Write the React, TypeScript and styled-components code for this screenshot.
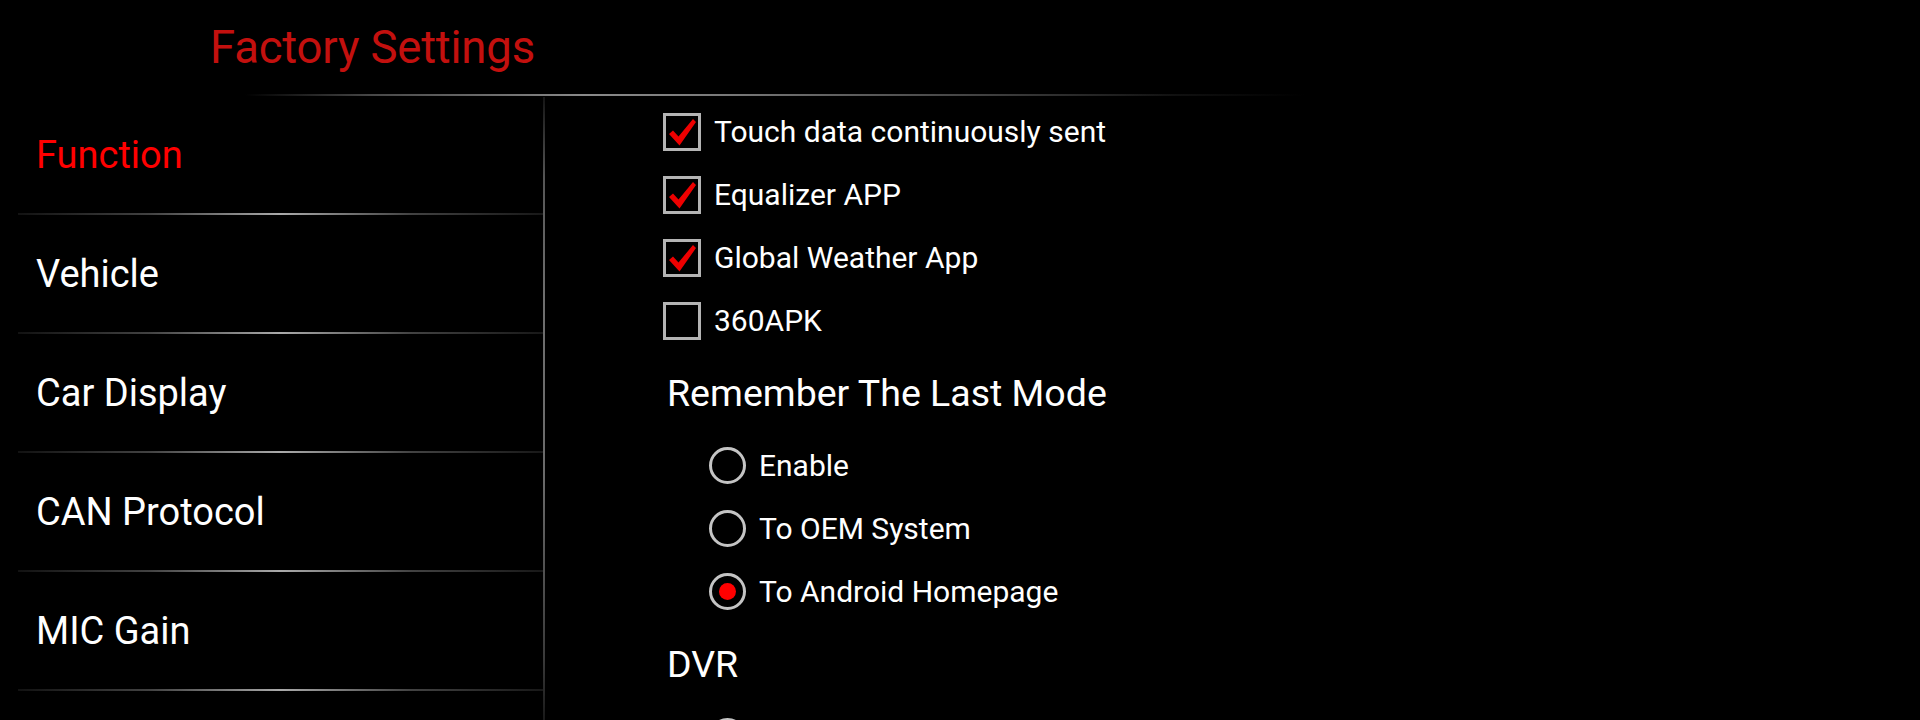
import React from "react";
import styled, { createGlobalStyle } from "styled-components";

const GlobalStyle = createGlobalStyle`
  html, body {
    margin: 0;
    padding: 0;
    background: #000;
  }
  body {
    width: 1920px;
    height: 720px;
    overflow: hidden;
    font-family: Roboto, "Noto Sans", "Liberation Sans", sans-serif;
    color: #fff;
  }
`;

const Screen = styled.div`
  width: 1920px;
  height: 720px;
  background: #000;
  display: flex;
  flex-direction: column;
  overflow: hidden;
`;

const Header = styled.header`
  height: 94px;
  display: flex;
  align-items: center;
  padding-left: 210px;
  box-sizing: border-box;
`;

const Title = styled.h1`
  margin: 0;
  font-weight: 400;
  font-size: 45.5px;
  letter-spacing: -0.2px;
  color: #c3100e;
`;

const HeaderRule = styled.div`
  margin-left: 245px;
  width: 1060px;
  height: 2px;
  background: linear-gradient(
    90deg,
    rgba(140, 140, 140, 0) 0%,
    rgba(120, 120, 120, 0.6) 12%,
    #8a8a8a 32%,
    #7a7a7a 45%,
    #404040 70%,
    rgba(40, 40, 40, 0.4) 88%,
    rgba(0, 0, 0, 0) 100%
  );
`;

const Body = styled.div`
  flex: 1;
  display: flex;
  min-height: 0;
`;

const Sidebar = styled.nav`
  width: 525px;
  margin-left: 18px;
  display: flex;
  flex-direction: column;
`;

const MenuItem = styled.div<{ $active?: boolean }>`
  height: 117px;
  display: flex;
  align-items: center;
  padding-left: 18px;
  font-size: 38px;
  color: ${(p) => (p.$active ? "#ff0000" : "#ffffff")};
  flex-shrink: 0;
`;

const MenuDivider = styled.div`
  height: 2px;
  flex-shrink: 0;
  background: linear-gradient(
    90deg,
    rgba(60, 60, 60, 0.3) 0%,
    rgba(110, 110, 110, 0.6) 25%,
    rgba(200, 200, 200, 0.85) 50%,
    rgba(110, 110, 110, 0.6) 75%,
    rgba(60, 60, 60, 0.4) 100%
  );
`;

const VerticalRule = styled.div`
  width: 2px;
  margin-top: 1px;
  flex-shrink: 0;
  background: linear-gradient(
    180deg,
    #151515 0px,
    #555 80px,
    #6e6e6e 200px,
    #6a6a6a 380px,
    #3a3a3a 560px,
    #1a1a1a 100%
  );
`;

const Content = styled.section`
  flex: 1;
  padding-left: 118px;
  padding-top: 4px;
  display: flex;
  flex-direction: column;
`;

const OptionRow = styled.label<{ $indent?: number }>`
  height: 63px;
  display: flex;
  align-items: center;
  gap: 13px;
  padding-left: ${(p) => p.$indent ?? 0}px;
  font-size: 30px;
  color: #fff;
  flex-shrink: 0;
`;

const SectionTitle = styled.h2`
  margin: 0;
  height: 82px;
  display: flex;
  align-items: center;
  padding-left: 4px;
  font-size: 37.5px;
  font-weight: 400;
  color: #fff;
  flex-shrink: 0;
`;

const BoxSvg = styled.svg`
  width: 38px;
  height: 38px;
  flex-shrink: 0;
  display: block;
`;

const RadioCircle = styled.span<{ $on?: boolean }>`
  width: 37px;
  height: 37px;
  box-sizing: border-box;
  border: 3px solid #c4c4c4;
  border-radius: 50%;
  display: flex;
  align-items: center;
  justify-content: center;
  flex-shrink: 0;
  &::after {
    content: "";
    width: 17px;
    height: 17px;
    border-radius: 50%;
    background: ${(p) => (p.$on ? "#ff0000" : "transparent")};
  }
`;

const CheckBox: React.FC<{ checked?: boolean }> = ({ checked }) => (
  <BoxSvg viewBox="0 0 38 38">
    <rect x="1.5" y="1.5" width="35" height="35" fill="#000" stroke="#b4b4b4" strokeWidth="3" />
    {checked && (
      <polygon
        points="6,21 10,17.5 15.5,23.5 30,6 33,9 16.5,32.5"
        fill="#ee0000"
      />
    )}
  </BoxSvg>
);

const menu = ["Function", "Vehicle", "Car Display", "CAN Protocol", "MIC Gain"];

const checks: { label: string; checked: boolean }[] = [
  { label: "Touch data continuously sent", checked: true },
  { label: "Equalizer APP", checked: true },
  { label: "Global Weather App", checked: true },
  { label: "360APK", checked: false },
];

const modes: { label: string; on: boolean }[] = [
  { label: "Enable", on: false },
  { label: "To OEM System", on: false },
  { label: "To Android Homepage", on: true },
];

export default function App() {
  return (
    <Screen>
      <GlobalStyle />
      <Header>
        <Title>Factory Settings</Title>
      </Header>
      <HeaderRule />
      <Body>
        <Sidebar>
          {menu.map((m, i) => (
            <React.Fragment key={m}>
              <MenuItem $active={i === 0}>{m}</MenuItem>
              <MenuDivider />
            </React.Fragment>
          ))}
        </Sidebar>
        <VerticalRule />
        <Content>
          {checks.map((c) => (
            <OptionRow key={c.label}>
              <CheckBox checked={c.checked} />
              {c.label}
            </OptionRow>
          ))}
          <SectionTitle>Remember The Last Mode</SectionTitle>
          {modes.map((m) => (
            <OptionRow key={m.label} $indent={46}>
              <RadioCircle $on={m.on} />
              {m.label}
            </OptionRow>
          ))}
          <SectionTitle>DVR</SectionTitle>
          <OptionRow $indent={46}>
            <RadioCircle />
            Enable
          </OptionRow>
        </Content>
      </Body>
    </Screen>
  );
}
